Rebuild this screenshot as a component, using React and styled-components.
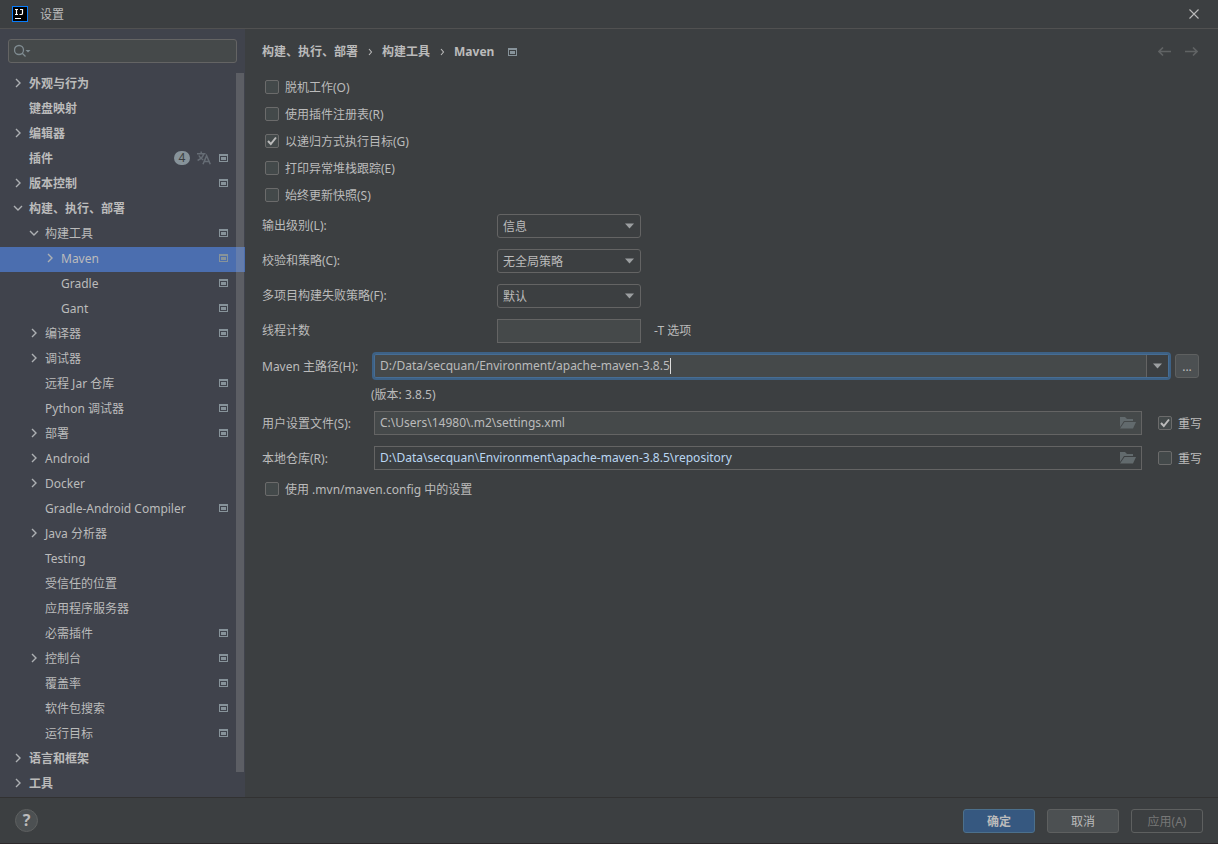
import React, { useState } from 'react';
import styled, { createGlobalStyle, css } from 'styled-components';

const GlobalStyle = createGlobalStyle`
  * {
    box-sizing: border-box;
  }

  body {
    margin: 0;
    background: #3c3f41;
  }

  body, button, input, select {
    font-family: 'Noto Sans', 'Noto Sans CJK SC', sans-serif;
    font-size: 12px;
    line-height: 16px;
    color: #bbbbbb;
  }
`;

const Window = styled.div`
  display: flex;
  flex-direction: column;
  min-height: 100vh;
  background: #3c3f41;
`;

const TitleBar = styled.header`
  display: flex;
  align-items: center;
  justify-content: space-between;
  height: 29px;
  padding: 0 18px 0 12px;
  border-bottom: 1px solid #515151;
`;

const TitleGroup = styled.div`
  display: flex;
  align-items: center;
  gap: 12px;
`;

const Title = styled.h1`
  margin: 0;
  padding-top: 2px;
  font-size: 12px;
  font-weight: 400;
`;

const IconButton = styled.button`
  display: flex;
  padding: 0;
  border: 0;
  background: none;
  color: ${(props) => (props.disabled ? '#606364' : '#bbbbbb')};
`;

const Body = styled.div`
  display: flex;
  flex: 1;
`;

const Sidebar = styled.nav`
  flex: 0 0 245px;
  background: #40434c;
`;

const SearchBox = styled.label`
  display: flex;
  align-items: center;
  height: 24px;
  margin: 10px 8px 9px;
  padding: 0 5px;
  border: 1px solid #646464;
  border-radius: 3px;
  background: #45494a;
`;

const SearchInput = styled.input`
  flex: 1;
  min-width: 0;
  padding: 0 4px;
  border: 0;
  outline: 0;
  background: none;
`;

const TreeArea = styled.div`
  position: relative;
`;

const Tree = styled.ul`
  margin: 0;
  padding: 0;
  list-style: none;
`;

const TreeRow = styled.button`
  display: flex;
  align-items: center;
  gap: 6px;
  width: 100%;
  height: 25px;
  padding: 0 17px 3px ${(props) => 13 + props.$level * 16}px;
  border: 0;
  text-align: left;
  font-weight: ${(props) => (props.$level === 0 ? 700 : 400)};
  background: ${(props) => (props.$selected ? '#4b6eaf' : 'transparent')};
`;

const TreeText = styled.span`
  flex: 1;
  padding-top: 2px;
  white-space: nowrap;
`;

const Badges = styled.span`
  display: flex;
  align-items: center;
  gap: 7px;
  padding-right: 2px;
`;

const Count = styled.span`
  width: 16px;
  height: 14px;
  border-radius: 7px;
  background: #87939a;
  color: #3c3f41;
  font-weight: 400;
  line-height: 14px;
  text-align: center;
`;

const ScrollThumb = styled.div`
  position: absolute;
  top: 1px;
  right: 1px;
  bottom: 25px;
  width: 8px;
  background: rgba(166, 166, 166, 0.28);
`;

const Main = styled.main`
  flex: 1;
  min-width: 0;
  padding: 13px 16px 0 17px;
`;

const Header = styled.div`
  display: flex;
  align-items: center;
  justify-content: space-between;
  height: 20px;
  margin-bottom: 11px;
  padding-right: 4px;
`;

const Breadcrumbs = styled.div`
  display: flex;
  align-items: center;
  gap: 9px;
  font-size: 12px;
  font-weight: 700;
`;

const MarkerSlot = styled.span`
  display: flex;
  margin-left: 5px;
`;

const History = styled.div`
  display: flex;
  gap: 14px;
`;

const CheckLabel = styled.label`
  display: flex;
  align-items: center;
  gap: 6px;
  height: 27px;
  white-space: nowrap;
`;

const CheckText = styled.span`
  padding-top: 2px;
`;

const CheckList = styled.div`
  padding-left: 3px;
`;

const CheckBoxFrame = styled.span`
  position: relative;
  display: flex;
  width: 14px;
  height: 14px;

  svg {
    position: absolute;
    inset: 0;
    pointer-events: none;
  }
`;

const CheckInput = styled.input`
  appearance: none;
  width: 14px;
  height: 14px;
  margin: 0;
  border: 1px solid #6b6b6b;
  border-radius: 2px;
  background: #43494a;
`;

const OptionRow = styled.div`
  display: grid;
  grid-template-columns: 235px 144px auto;
  align-items: center;
  height: 35px;
`;

const Hint = styled.span`
  padding-left: 13px;
`;

const SelectFrame = styled.div`
  position: relative;

  svg {
    position: absolute;
    top: 9px;
    right: 7px;
    pointer-events: none;
  }
`;

const Select = styled.select`
  appearance: none;
  width: 100%;
  height: 24px;
  padding: 2px 20px 0 5px;
  border: 1px solid #646464;
  border-radius: 3px;
  background: #3c3f41;
`;

const boxed = css`
  height: 24px;
  border: 1px solid #646464;
  background: ${(props) => (props.$plain ? '#3c3f41' : '#45494a')};
`;

const TextInput = styled.input`
  ${boxed}
  width: 100%;
  padding: 0 5px;
  outline: 0;
`;

const PathRow = styled.div`
  display: flex;
  align-items: center;
  height: 35px;
`;

const PathLabel = styled.label`
  flex: 0 0 112px;
  padding-top: 2px;
`;

const PathField = styled.div`
  ${boxed}
  display: flex;
  flex: 1;
  align-items: center;
  margin-right: 16px;
  padding: 0 5px;
`;

const PathInput = styled.input`
  flex: 1;
  min-width: 0;
  padding: 0;
  border: 0;
  outline: 0;
  background: none;
  color: ${(props) => (props.$changed ? '#bad6f2' : '#bbbbbb')};
`;

const Override = styled(CheckLabel)`
  height: 24px;
`;

const HomeCombo = styled.div`
  display: flex;
  flex: 1;
  align-items: center;
  height: 24px;
  margin-right: 6px;
  padding-left: 6px;
  border-radius: 2px;
  background: #45494a;
  box-shadow: 0 0 0 2px #3d6185, inset 0 0 0 1px #466d94;
`;

const HomeInput = styled.input`
  field-sizing: content;
  padding: 0;
  border: 0;
  outline: 0;
  background: none;
  caret-color: transparent;
`;

const Caret = styled.span`
  width: 1px;
  height: 16px;
  background: #dddddd;
`;

const ComboToggle = styled.button`
  display: flex;
  align-items: center;
  justify-content: center;
  width: 22px;
  height: 22px;
  margin: 0 1px 0 auto;
  padding: 0;
  border: 0;
  border-left: 1px solid #646464;
  background: #3c3f41;
`;

const BrowseButton = styled.button`
  width: 24px;
  height: 24px;
  margin-right: 3px;
  padding: 2px 0 0;
  border: 1px solid #5e6060;
  border-radius: 3px;
  background: #4c5052;
`;

const VersionText = styled.div`
  height: 22px;
  padding: 4px 0 0 109px;
`;

const Footer = styled.footer`
  display: flex;
  align-items: center;
  justify-content: space-between;
  height: 47px;
  padding: 0 15px;
  border-top: 1px solid #323232;
  border-bottom: 1px solid #2d292b;
`;

const HelpButton = styled.button`
  width: 23px;
  height: 23px;
  padding: 0;
  border: 1px solid #5e6060;
  border-radius: 50%;
  background: #4c5052;
  font-size: 16px;
  font-weight: 700;
  line-height: 21px;
`;

const Actions = styled.div`
  display: flex;
  gap: 12px;
`;

const variants = {
  primary: css`
    border-color: #4c708c;
    background: #365880;
    font-weight: 700;
  `,
  normal: css`
    border-color: #5e6060;
    background: #4c5052;
  `,
  disabled: css`
    border-color: #5e6060;
    background: transparent;
    color: #777777;
  `,
};

const ActionButton = styled.button`
  width: 72px;
  height: 24px;
  padding: 2px 0 0;
  border: 1px solid;
  border-radius: 3px;
  ${(props) => variants[props.$variant]}
`;

const Logo = () => (
  <svg width="16" height="16" viewBox="0 0 16 16">
    <rect width="16" height="16" fill="#087cfa" />
    <rect x="1" y="1" width="14" height="14" fill="#000000" />
    <path d="M3 3.5h3M4.5 3.5v5M3 8.5h3M8 3.5h2.5v3.7q0 1.3-1.3 1.3H7.5M3 12.5h6" fill="none" stroke="#ffffff" strokeWidth="1.2" />
  </svg>
);

const CloseIcon = () => (
  <svg width="12" height="12" viewBox="0 0 12 12" fill="none" stroke="currentColor" strokeWidth="1.1">
    <path d="M1.5 1.5l9 9M10.5 1.5l-9 9" />
  </svg>
);

const SearchIcon = () => (
  <svg width="17" height="14" viewBox="0 0 17 14" fill="none" stroke="#7f8b91" strokeWidth="1.3">
    <circle cx="5" cy="6" r="4.5" />
    <path d="M8 9l3.500 3.500" />
    <path d="M11.5 6h5l-2.5 2.500z" fill="#7f8b91" stroke="none" />
  </svg>
);

const Chevron = ({ open }) => (
  <svg width="10" height="10" viewBox="0 0 10 10" fill="none" stroke="#adb0b3" strokeWidth="1.4">
    {open === true && <path d="M1 3l4 4 4-4" />}
    {open === false && <path d="M3 1l4 4-4 4" />}
  </svg>
);

const Marker = () => (
  <svg width="9" height="8" viewBox="0 0 9 8" shapeRendering="crispEdges">
    <path d="M0 0h9v8H0zM1 2v5h7V2z" fill="#87939a" fillRule="evenodd" />
    <rect x="2" y="3" width="5" height="3" fill="#87939a" />
  </svg>
);

const TranslateIcon = () => (
  <svg width="14" height="14" viewBox="0 0 14 14" fill="none" stroke="#666d75" strokeWidth="1.5">
    <path d="M0 2.700h8.500M4.200.5v2.200M6.800 2.700C6 5.500 3.700 8 .6 9.500M1.900 4.500C2.800 6.500 4.600 8 6.200 8.800" />
    <path d="M6 13.300l3.600-8.600 3.700 8.600M7.200 10.500h4.800" />
  </svg>
);

const Separator = () => (
  <svg width="6" height="8" viewBox="0 0 6 8" fill="none" stroke="#bbbbbb" strokeWidth="1.1">
    <path d="M2 1l2.500 3L2 7" />
  </svg>
);

const ArrowIcon = ({ right }) => (
  <svg width="13" height="10" viewBox="0 0 13 10" fill="none" stroke="currentColor" strokeWidth="1.6">
    {right ? <path d="M0 4.500h12M8 .5l4 4-4 4" /> : <path d="M13 4.500H1M5 .5l-4 4 4 4" />}
  </svg>
);

const DownArrow = () => (
  <svg width="9" height="6" viewBox="0 0 9 6">
    <path d="M0 .5h9L4.5 5.500z" fill="#9c9fa1" />
  </svg>
);

const FolderIcon = () => (
  <svg width="16" height="12" viewBox="0 0 16 12" fill="#626a6d">
    <path d="M0 0h5l2 2h6v2H4L0 10z" />
    <path d="M4.500 5H16l-3 6.500H0z" />
  </svg>
);

const treeItems = [
  { text: '外观与行为', level: 0, open: false },
  { text: '键盘映射', level: 0 },
  { text: '编辑器', level: 0, open: false },
  { text: '插件', level: 0, marker: true, count: 4 },
  { text: '版本控制', level: 0, open: false, marker: true },
  { text: '构建、执行、部署', level: 0, open: true },
  { text: '构建工具', level: 1, open: true, marker: true },
  { text: 'Maven', level: 2, open: false, marker: true },
  { text: 'Gradle', level: 2, marker: true },
  { text: 'Gant', level: 2, marker: true },
  { text: '编译器', level: 1, open: false, marker: true },
  { text: '调试器', level: 1, open: false },
  { text: '远程 Jar 仓库', level: 1, marker: true },
  { text: 'Python 调试器', level: 1, marker: true },
  { text: '部署', level: 1, open: false, marker: true },
  { text: 'Android', level: 1, open: false },
  { text: 'Docker', level: 1, open: false },
  { text: 'Gradle-Android Compiler', level: 1, marker: true },
  { text: 'Java 分析器', level: 1, open: false },
  { text: 'Testing', level: 1 },
  { text: '受信任的位置', level: 1 },
  { text: '应用程序服务器', level: 1 },
  { text: '必需插件', level: 1, marker: true },
  { text: '控制台', level: 1, open: false, marker: true },
  { text: '覆盖率', level: 1, marker: true },
  { text: '软件包搜索', level: 1, marker: true },
  { text: '运行目标', level: 1, marker: true },
  { text: '语言和框架', level: 0, open: false },
  { text: '工具', level: 0, open: false },
];

const checks = [
  { text: '脱机工作(O)' },
  { text: '使用插件注册表(R)' },
  { text: '以递归方式执行目标(G)', checked: true },
  { text: '打印异常堆栈跟踪(E)' },
  { text: '始终更新快照(S)' },
];

const options = [
  { id: 'output', label: '输出级别(L):', value: '信息' },
  { id: 'checksum', label: '校验和策略(C):', value: '无全局策略' },
  { id: 'fail', label: '多项目构建失败策略(F):', value: '默认' },
];

const Check = ({ as: Label = CheckLabel, text, initial = false }) => {
  const [checked, setChecked] = useState(initial);
  return (
    <Label>
      <CheckBoxFrame>
        <CheckInput type="checkbox" checked={checked} onChange={() => setChecked(!checked)} />
        {checked && (
          <svg width="14" height="14" viewBox="0 0 14 14" fill="none" stroke="#bbbbbb" strokeWidth="2">
            <path d="M3 7l2.800 3L11 3.500" />
          </svg>
        )}
      </CheckBoxFrame>
      <CheckText>{text}</CheckText>
    </Label>
  );
};

const App = () => {
  const [selected, setSelected] = useState('Maven');

  return (
    <Window>
      <GlobalStyle />
      <TitleBar>
        <TitleGroup>
          <Logo />
          <Title>设置</Title>
        </TitleGroup>
        <IconButton aria-label="关闭">
          <CloseIcon />
        </IconButton>
      </TitleBar>

      <Body>
        <Sidebar>
          <SearchBox>
            <SearchIcon />
            <SearchInput type="text" aria-label="搜索" />
          </SearchBox>
          <TreeArea>
            <Tree>
              {treeItems.map((item) => (
                <li key={item.text}>
                  <TreeRow
                    $level={item.level}
                    $selected={item.text === selected}
                    onClick={() => setSelected(item.text)}
                  >
                    <Chevron open={item.open} />
                    <TreeText>{item.text}</TreeText>
                    {item.count && (
                      <Badges>
                        <Count>{item.count}</Count>
                        <TranslateIcon />
                      </Badges>
                    )}
                    {item.marker && <Marker />}
                  </TreeRow>
                </li>
              ))}
            </Tree>
            <ScrollThumb />
          </TreeArea>
        </Sidebar>

        <Main>
          <Header>
            <Breadcrumbs>
              <span>构建、执行、部署</span>
              <Separator />
              <span>构建工具</span>
              <Separator />
              <span>Maven</span>
              <MarkerSlot>
                <Marker />
              </MarkerSlot>
            </Breadcrumbs>
            <History>
              <IconButton disabled aria-label="后退">
                <ArrowIcon />
              </IconButton>
              <IconButton disabled aria-label="前进">
                <ArrowIcon right />
              </IconButton>
            </History>
          </Header>

          <CheckList>
            {checks.map((item) => (
              <Check key={item.text} text={item.text} initial={item.checked} />
            ))}
          </CheckList>

          {options.map((item) => (
            <OptionRow key={item.id}>
              <label htmlFor={item.id}>{item.label}</label>
              <SelectFrame>
                <Select id={item.id}>
                  <option>{item.value}</option>
                </Select>
                <DownArrow />
              </SelectFrame>
            </OptionRow>
          ))}
          <OptionRow>
            <label htmlFor="threads">线程计数</label>
            <TextInput id="threads" type="text" />
            <Hint>-T 选项</Hint>
          </OptionRow>

          <PathRow>
            <PathLabel htmlFor="home">Maven 主路径(H):</PathLabel>
            <HomeCombo>
              <HomeInput id="home" type="text" defaultValue="D:/Data/secquan/Environment/apache-maven-3.8.5" />
              <Caret />
              <ComboToggle aria-label="显示列表">
                <DownArrow />
              </ComboToggle>
            </HomeCombo>
            <BrowseButton>...</BrowseButton>
          </PathRow>
          <VersionText>(版本: 3.8.5)</VersionText>

          <PathRow>
            <PathLabel htmlFor="settings">用户设置文件(S):</PathLabel>
            <PathField>
              <PathInput id="settings" type="text" defaultValue="C:\Users\14980\.m2\settings.xml" />
              <FolderIcon />
            </PathField>
            <Check as={Override} text="重写" initial />
          </PathRow>
          <PathRow>
            <PathLabel htmlFor="repository">本地仓库(R):</PathLabel>
            <PathField $plain>
              <PathInput
                id="repository"
                type="text"
                $changed
                defaultValue="D:\Data\secquan\Environment\apache-maven-3.8.5\repository"
              />
              <FolderIcon />
            </PathField>
            <Check as={Override} text="重写" />
          </PathRow>

          <CheckList>
            <Check text="使用 .mvn/maven.config 中的设置" />
          </CheckList>
        </Main>
      </Body>

      <Footer>
        <HelpButton aria-label="帮助">?</HelpButton>
        <Actions>
          <ActionButton $variant="primary">确定</ActionButton>
          <ActionButton $variant="normal">取消</ActionButton>
          <ActionButton $variant="disabled" disabled>应用(A)</ActionButton>
        </Actions>
      </Footer>
    </Window>
  );
};

export default App;
